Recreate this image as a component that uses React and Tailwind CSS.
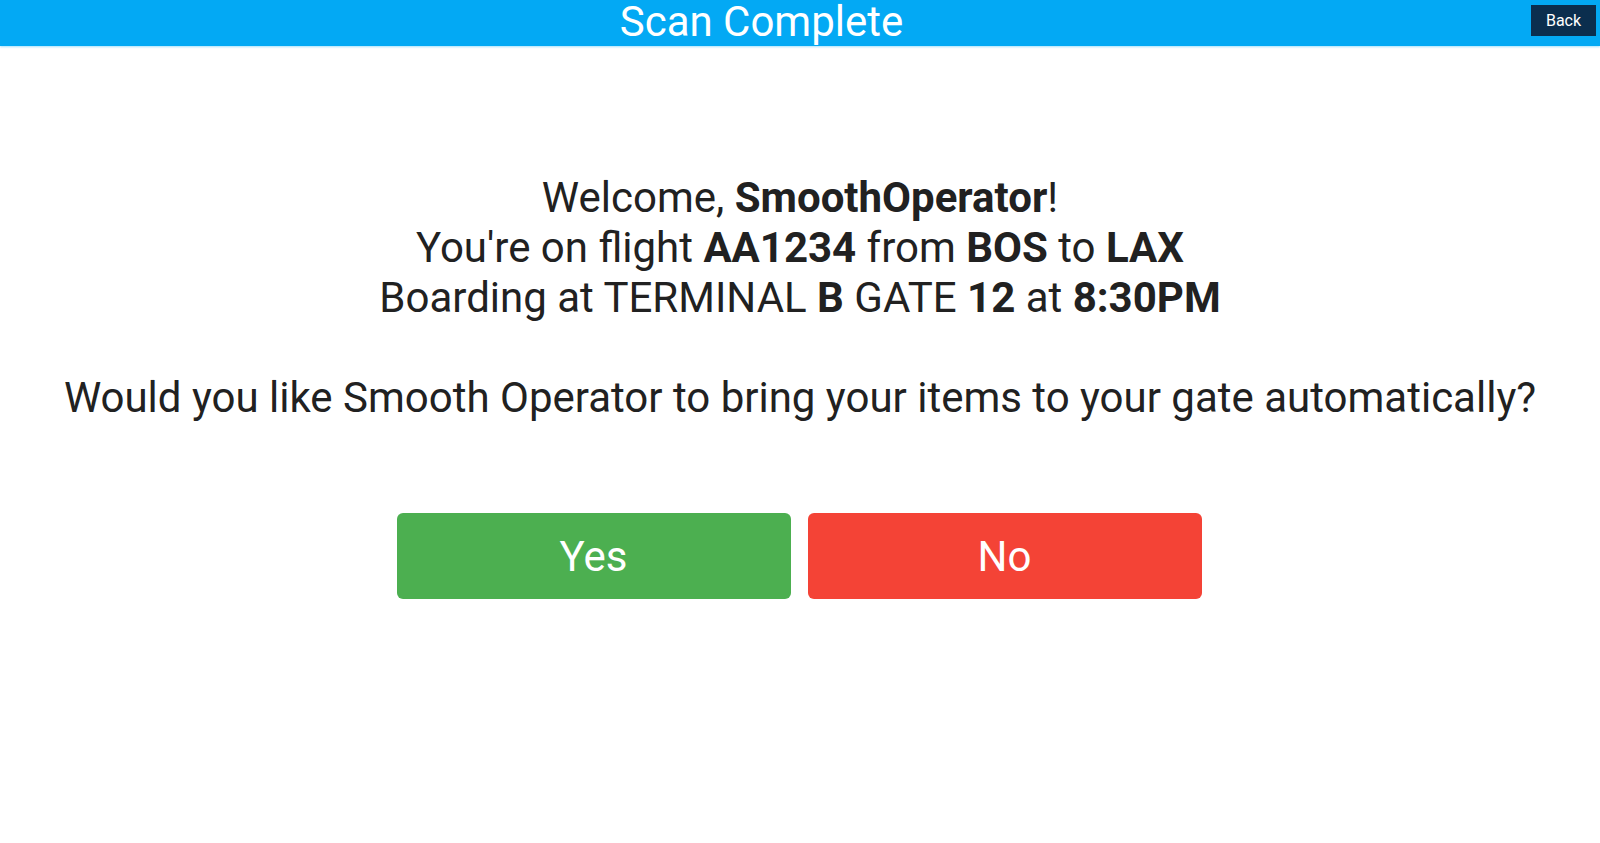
export default function App() {
  return (
    <div className="w-[1600px] h-[843px] bg-white overflow-hidden" style={{ fontFamily: "Roboto, 'Noto Sans', sans-serif" }}>
      <div className="h-[46px] bg-[#03a9f4] flex items-start shadow-[0_1px_2px_rgba(3,169,244,0.35)]">
        <div className="flex-1 text-center text-white text-[42px] leading-[44px] pr-[8px]">Scan Complete</div>
        <button className="mr-[4px] mt-[5px] h-[31px] w-[65px] bg-[#0b2e4e] text-white text-[16px] flex items-center justify-center">Back</button>
      </div>
      <div className="pt-[127px] text-center text-[#212121] text-[42px] leading-[50px]">
        <div>Welcome, <b className="font-bold">SmoothOperator</b>!</div>
        <div>You're on flight <b className="font-bold">AA1234</b> from <b className="font-bold">BOS</b> to <b className="font-bold">LAX</b></div>
        <div>Boarding at TERMINAL <b className="font-bold">B</b> GATE <b className="font-bold">12</b> at <b className="font-bold">8:30PM</b></div>
        <div className="h-[50px]" />
        <div>Would you like Smooth Operator to bring your items to your gate automatically?</div>
      </div>
      <div className="mt-[90px] flex justify-center gap-[17px] pr-[2px]">
        <button className="w-[394px] h-[86px] rounded-[6px] bg-[#4caf50] text-white text-[42px] leading-none pt-[2px]">Yes</button>
        <button className="w-[394px] h-[86px] rounded-[6px] bg-[#f44336] text-white text-[42px] leading-none pt-[2px]">No</button>
      </div>
    </div>
  );
}
